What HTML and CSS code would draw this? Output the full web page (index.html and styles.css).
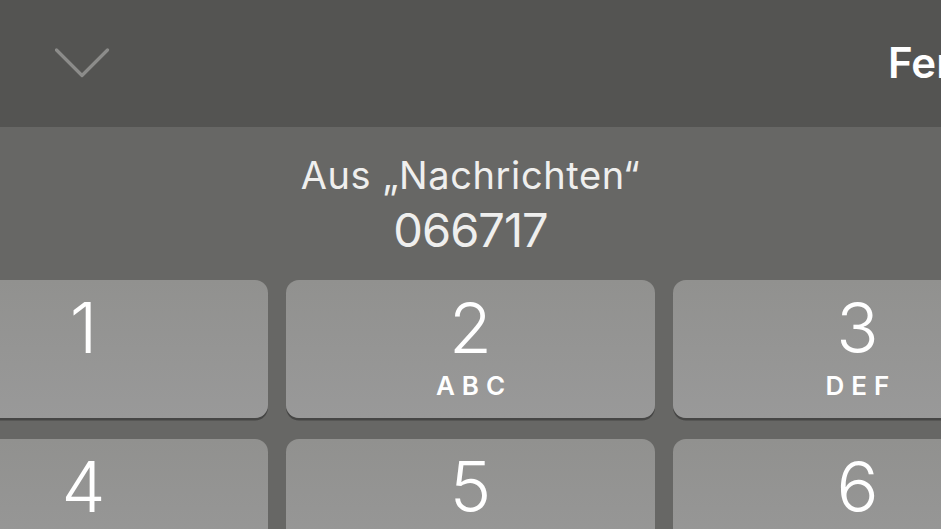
FILE: index.html
```html
<!DOCTYPE html>
<html>
  <head>
    <meta http-equiv="Content-Type" content="text/html; charset=UTF-8"/>
    <meta name="viewport" content="width=device-width, initial-scale=1.0">
    <link rel="stylesheet" href="styles.css">
  </head>
  <body>
    <div id="toolbar">
      <svg id="toolbarClose" width="56" height="30" viewBox="0 0 56 30">
        <polyline points="1.5,2 27,27.5 52.5,2" fill="none" stroke="#8c8c8a" stroke-width="3.2" stroke-linecap="round" stroke-linejoin="round"/>
      </svg>
      <div id="toolbarDone">Fertig</div>
    </div>

    <div id="keyboard">
      <div id="suggestion">
        <div id="suggestionSource">Aus „Nachrichten“</div>
        <div id="suggestionCode">066717</div>
      </div>

      <div id="keypad">
        <div class="key">
          <div class="keyDigit">1</div>
        </div>
        <div class="key">
          <div class="keyDigit">2</div>
          <div class="keyLetters">ABC</div>
        </div>
        <div class="key">
          <div class="keyDigit">3</div>
          <div class="keyLetters">DEF</div>
        </div>
        <div class="key">
          <div class="keyDigit">4</div>
          <div class="keyLetters">GHI</div>
        </div>
        <div class="key">
          <div class="keyDigit">5</div>
          <div class="keyLetters">JKL</div>
        </div>
        <div class="key">
          <div class="keyDigit">6</div>
          <div class="keyLetters">MNO</div>
        </div>
      </div>
    </div>
  </body>
</html>
```

FILE: styles.css
```css
html {
  font-family: Inter, 'Noto Sans', 'Liberation Sans', sans-serif;
  width: 100%;
  height: 100%;
  margin: 0;
  padding: 0;
  overflow: hidden;
}
body {
  width: 100%;
  height: 100%;
  margin: 0;
  padding: 0;
  overflow: hidden;
  background: #676765;
}
* {
  user-select: none;
  -webkit-user-select: none;
}

#toolbar {
  height: 127px;
  background: #545452;
  display: flex;
  align-items: center;
  padding-left: 55px;
  margin-right: -200px;
}
#toolbarClose {
  display: block;
  margin-top: -2px;
}
#toolbarDone {
  margin-left: 777px;
  margin-top: -2px;
  color: #fff;
  font-weight: 600;
  font-size: 42px;
  white-space: nowrap;
}

#keyboard {
  background: #676765;
}

#suggestion {
  height: 153px;
  box-sizing: border-box;
  padding-top: 28px;
  text-align: center;
  color: #efefee;
}
#suggestionSource {
  font-size: 38px;
  line-height: 40px;
  font-weight: 400;
  letter-spacing: 0.6px;
}
#suggestionCode {
  margin-top: 10px;
  font-size: 47px;
  line-height: 50px;
  font-weight: 400;
  letter-spacing: -1px;
}

/* the pad is wider than the screen, outer keys are cut at the edges */
#keypad {
  display: grid;
  grid-template-columns: repeat(3, 1fr);
  column-gap: 18px;
  row-gap: 21px;
  margin: 0 -101px;
}
.key {
  height: 138px;
  box-sizing: border-box;
  padding-top: 13px;
  border-radius: 13px;
  background: linear-gradient(to bottom, #91918f, #999999);
  box-shadow: 0 2.5px 0 #464645;
  text-align: center;
  color: #fff;
}
.keyDigit {
  font-size: 70px;
  line-height: 70px;
  font-weight: 300;
}
.keyLetters {
  margin-top: 10px;
  font-size: 26px;
  line-height: 26px;
  font-weight: 600;
  letter-spacing: 7px;
  padding-left: 7px;
}
```
